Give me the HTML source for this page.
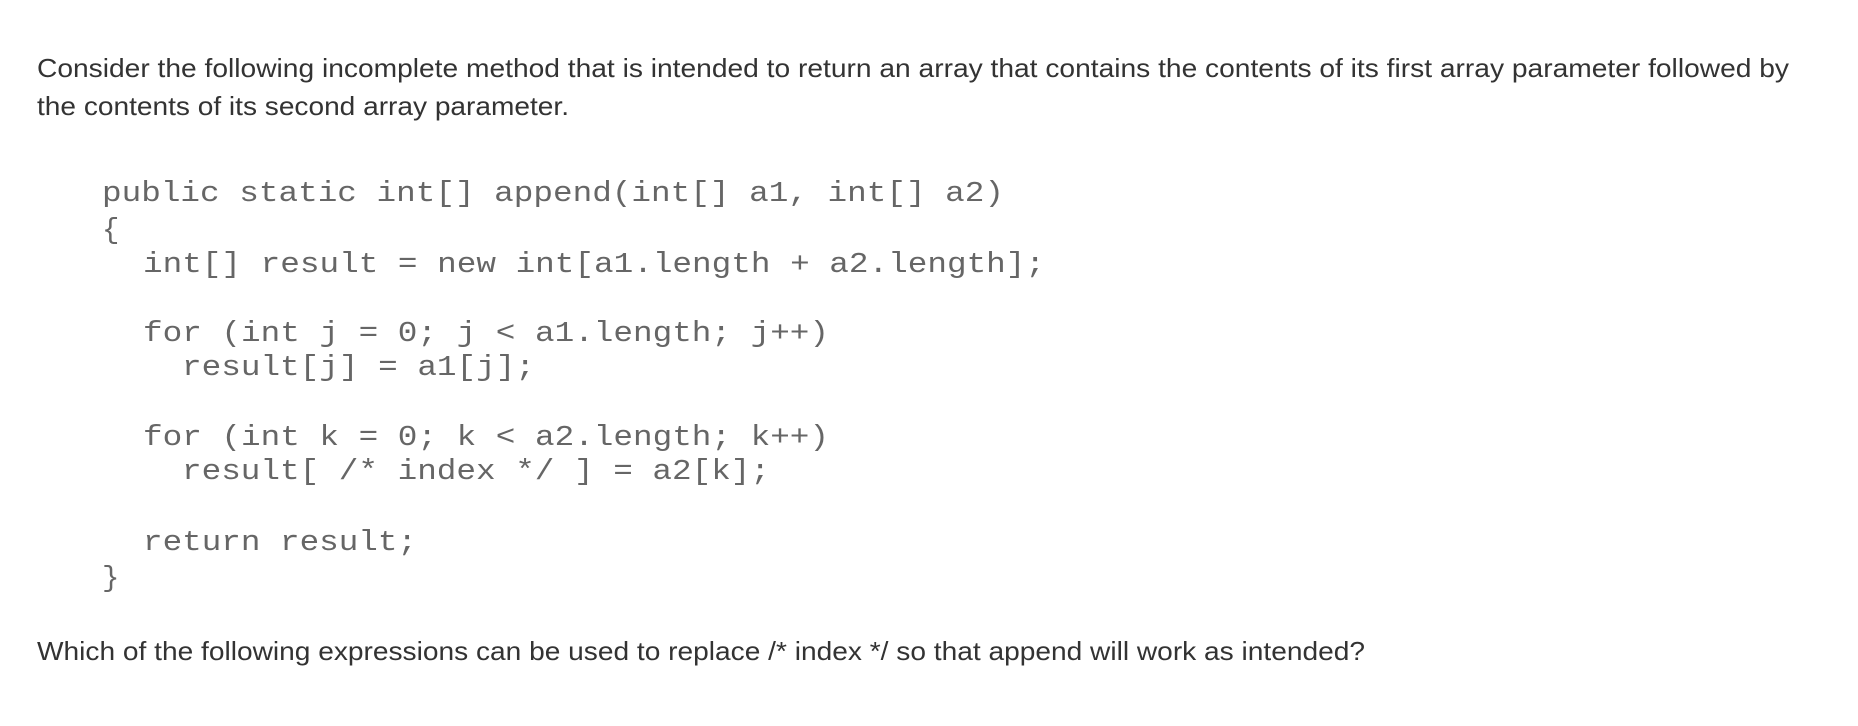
<!DOCTYPE html>
<html><head><meta charset="utf-8"><style>
html,body{margin:0;padding:0;background:#fff;width:1858px;height:726px;overflow:hidden}
svg{display:block}
.p{font-family:"Liberation Sans",sans-serif;font-size:26px;fill:#333}
.c{font-family:"Liberation Mono",monospace;font-size:29px;fill:#666}
</style></head><body>
<svg width="1858" height="726" viewBox="0 0 1858 726" xmlns="http://www.w3.org/2000/svg">
<text class="p" x="37" y="77" textLength="1752" lengthAdjust="spacingAndGlyphs">Consider the following incomplete method that is intended to return an array that contains the contents of its first array parameter followed by</text>
<text class="p" x="37" y="115" textLength="532" lengthAdjust="spacingAndGlyphs">the contents of its second array parameter.</text>
<text class="c" x="102" y="201" textLength="902" lengthAdjust="spacingAndGlyphs">public static int[] append(int[] a1, int[] a2)</text>
<text class="c" x="102" y="238">{</text>
<text class="c" x="143" y="272" textLength="902" lengthAdjust="spacingAndGlyphs">int[] result = new int[a1.length + a2.length];</text>
<text class="c" x="143" y="341" textLength="686" lengthAdjust="spacingAndGlyphs">for (int j = 0; j &lt; a1.length; j++)</text>
<text class="c" x="182" y="375" textLength="353" lengthAdjust="spacingAndGlyphs">result[j] = a1[j];</text>
<text class="c" x="143" y="445" textLength="686" lengthAdjust="spacingAndGlyphs">for (int k = 0; k &lt; a2.length; k++)</text>
<text class="c" x="182" y="479" textLength="588" lengthAdjust="spacingAndGlyphs">result[ /* index */ ] = a2[k];</text>
<text class="c" x="143" y="550" textLength="274" lengthAdjust="spacingAndGlyphs">return result;</text>
<text class="c" x="102" y="586">}</text>
<text class="p" x="37" y="660" textLength="1328" lengthAdjust="spacingAndGlyphs">Which of the following expressions can be used to replace /* index */ so that append will work as intended?</text>
</svg>
</body></html>
